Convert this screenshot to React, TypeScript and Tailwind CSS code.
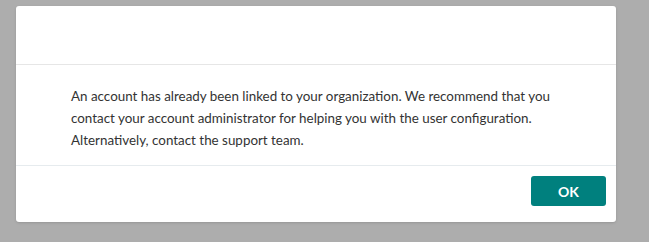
export default function App() {
  return (
    <div className="flex h-[242px] w-[649px] items-start bg-[#adadad] pl-4 pt-[6px] font-['Lato',sans-serif]">
      <div className="flex w-[600px] flex-col rounded-[3px] bg-white shadow-sm">
        <div className="h-[59px] border-b border-[#e6e6e6]" />
        <div className="px-[55px] pb-[14px] pt-[20px] text-[13.4px] leading-[22px] text-[#333333]">
          An account has already been linked to your organization. We recommend that you
          <br />
          contact your account administrator for helping you with the user configuration.
          <br />
          Alternatively, contact the support team.
        </div>
        <div className="flex justify-end border-t border-[#e6ebee] pb-4 pr-[10px] pt-[10px]">
          <button className="h-[30px] w-[75px] rounded-[3px] bg-[#00807e] text-[14px] font-bold text-white">
            OK
          </button>
        </div>
      </div>
    </div>
  );
}
